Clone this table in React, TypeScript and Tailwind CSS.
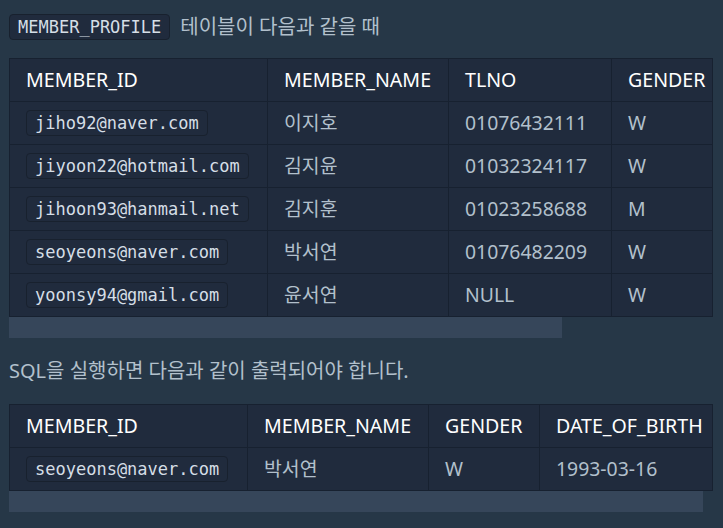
import React from "react";

const FONT = { fontFamily: '"Noto Sans", "Noto Sans CJK KR", sans-serif' };
const MONO = { fontFamily: '"DejaVu Sans Mono", "Noto Sans CJK KR", monospace' };

function Code({ children, block }: { children: React.ReactNode; block?: boolean }) {
  return (
    <code
      style={MONO}
      className={
        (block ? "block w-fit " : "inline-block align-middle ") +
        "h-[26px] leading-[24px] rounded-[4px] border border-[#18212e] bg-[#202b3d] px-[8px] text-[17px] text-[#d5dee6]"
      }
    >
      {children}
    </code>
  );
}

type Cell = React.ReactNode;

function DataTable({
  widths,
  headers,
  rows,
  thumb,
}: {
  widths: number[];
  headers: string[];
  rows: Cell[][];
  thumb: number;
}) {
  const total = widths.reduce((a, b) => a + b, 0);
  return (
    <div className="w-[704px]">
      <div className="overflow-hidden border-r border-[#172130]">
        <table className="table-fixed border-collapse bg-[#202b3d]" style={{ width: total }}>
          <colgroup>
            {widths.map((w, i) => (
              <col key={i} style={{ width: w }} />
            ))}
          </colgroup>
          <thead>
            <tr>
              {headers.map((h) => (
                <th
                  key={h}
                  className="h-[43px] border border-[#172130] px-4 py-0 text-left align-middle text-[19.6px] font-normal text-white whitespace-nowrap"
                >
                  {h}
                </th>
              ))}
            </tr>
          </thead>
          <tbody>
            {rows.map((r, i) => (
              <tr key={i}>
                {r.map((c, j) => (
                  <td
                    key={j}
                    className="h-[43px] border border-[#172130] px-4 py-0 align-middle text-[19.4px] text-[#b2c0cc] whitespace-nowrap"
                  >
                    {c}
                  </td>
                ))}
              </tr>
            ))}
          </tbody>
        </table>
      </div>
      <div className="h-[21px]">
        <div className="h-full bg-[#36465a]" style={{ width: thumb }} />
      </div>
    </div>
  );
}

export default function App() {
  return (
    <div style={FONT} className="min-h-[528px] w-[723px] bg-[#263747] px-[9px] pt-[10px]">
      <p className="h-[30px] leading-[30px] text-[20px] text-[#b2c0cc] whitespace-nowrap">
        <Code>MEMBER_PROFILE</Code>
        <span className="ml-[10px] align-middle">테이블이 다음과 같을 때</span>
      </p>
      <div className="mt-[18px]">
        <DataTable
          widths={[258, 181, 163, 111, 181]}
          headers={["MEMBER_ID", "MEMBER_NAME", "TLNO", "GENDER", "DATE_OF_BIRTH"]}
          rows={[
            [<Code block>jiho92@naver.com</Code>, "이지호", "01076432111", "W", "1992-02-12"],
            [<Code block>jiyoon22@hotmail.com</Code>, "김지윤", "01032324117", "W", "1992-02-22"],
            [<Code block>jihoon93@hanmail.net</Code>, "김지훈", "01023258688", "M", "1993-02-23"],
            [<Code block>seoyeons@naver.com</Code>, "박서연", "01076482209", "W", "1993-03-16"],
            [<Code block>yoonsy94@gmail.com</Code>, "윤서연", "NULL", "W", "1994-11-07"],
          ]}
          thumb={553}
        />
      </div>
      <p className="mt-[18px] h-[30px] leading-[30px] text-[20px] text-[#b2c0cc] whitespace-nowrap">
        SQL을 실행하면 다음과 같이 출력되어야 합니다.
      </p>
      <div className="mt-[18px]">
        <DataTable
          widths={[238, 181, 111, 173]}
          headers={["MEMBER_ID", "MEMBER_NAME", "GENDER", "DATE_OF_BIRTH"]}
          rows={[[<Code block>seoyeons@naver.com</Code>, "박서연", "W", "1993-03-16"]]}
          thumb={694}
        />
      </div>
    </div>
  );
}
